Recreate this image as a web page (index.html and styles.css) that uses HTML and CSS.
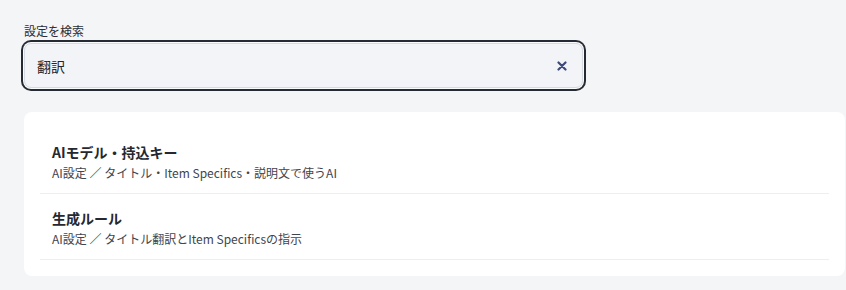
FILE: index.html
```html
<!DOCTYPE html>
<html lang="ja">
<head>
  <meta charset="UTF-8" />
  <title>設定を検索</title>
  <link rel="stylesheet" href="styles.css">
</head>
<body>
  <div class="page">
    <label class="search-label" for="search">設定を検索</label>
    <div class="search-box">
      <input type="text" id="search" value="翻訳" />
      <button class="clear" aria-label="クリア">
        <svg width="10" height="10" viewBox="0 0 10 10">
          <path d="M1.5 1.5 L8.5 8.5 M8.5 1.5 L1.5 8.5" stroke="#3d4b7c" stroke-width="2.2" stroke-linecap="round" />
        </svg>
      </button>
    </div>

    <div class="results">
      <!-- 検索結果 -->
      <a class="result-row" href="#">
        <div class="result-title">AIモデル・持込キー</div>
        <div class="result-sub">AI設定 ／ タイトル・Item Specifics・説明文で使うAI</div>
      </a>
      <a class="result-row" href="#">
        <div class="result-title">生成ルール</div>
        <div class="result-sub">AI設定 ／ タイトル翻訳とItem Specificsの指示</div>
      </a>
    </div>
  </div>
</body>
</html>
```

FILE: styles.css
```css
/* 設定検索 */
body {
  margin: 0;
  padding: 0;
  background-color: #f4f5f7;
  color: #1f2430;
  font-family: "Noto Sans CJK JP", "Noto Sans", sans-serif;
}

.page {
  padding: 23px 1px 0 24px;
}

.search-label {
  display: block;
  font-size: 12px;
  line-height: 16px;
  color: #2a2e36;
  margin-bottom: 4px;
}

.search-box {
  display: flex;
  align-items: center;
  width: 559px;
  height: 45px;
  box-sizing: border-box;
  background-color: #f2f4f7;
  border: 1px solid #d6dae2;
  border-radius: 7px;
  box-shadow: 0 0 0 1px #fafbfc, 0 0 0 3px #262a33;
}

.search-box input {
  flex: 1;
  border: none;
  background: transparent;
  outline: none;
  padding: 0 12px;
  font-family: inherit;
  font-size: 14px;
  color: #222630;
}

.clear {
  display: flex;
  align-items: center;
  justify-content: center;
  background: none;
  border: none;
  padding: 0;
  width: 20px;
  height: 20px;
  margin-right: 10px;
  cursor: pointer;
}

.results {
  margin-top: 24px;
  background-color: #ffffff;
  border-radius: 8px;
  padding: 16px;
}

.result-row {
  display: block;
  padding: 13px 12px 11px;
  border-bottom: 1px solid #eceef1;
  text-decoration: none;
  color: inherit;
}

.result-title {
  font-size: 14px;
  font-weight: 700;
  line-height: 22px;
  color: #25282f;
}

.result-sub {
  margin-top: 1px;
  font-size: 12px;
  line-height: 18px;
  color: #41454d;
}
```
